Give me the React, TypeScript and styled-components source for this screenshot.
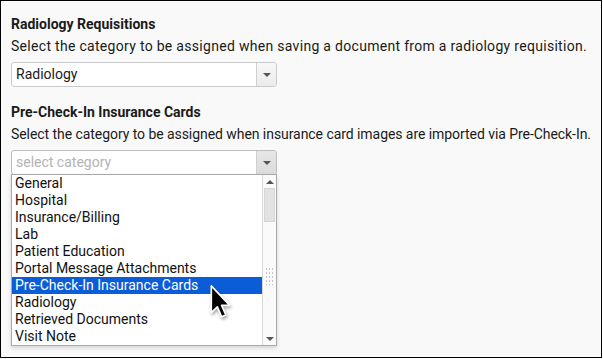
import React from 'react';
import styled, { createGlobalStyle } from 'styled-components';

const GlobalStyle = createGlobalStyle`
	html, body {
		margin: 0;
		padding: 0;
		background: #ffffff;
	}
	* {
		box-sizing: border-box;
	}
`;

const Frame = styled.div`
	position: relative;
	width: 602px;
	height: 358px;
	border: 1.5px solid #000;
	background: #f9f9f9;
	padding: 15px 10px 0 10px;
	font-family: Roboto, 'Liberation Sans', sans-serif;
	font-size: 14px;
	color: #1a1a1a;
`;

const Section = styled.section<{ gap: number }>`
	display: flex;
	flex-direction: column;
	margin-bottom: ${({ gap }) => gap}px;
`;

const Title = styled.h3`
	margin: 0 0 5px 0;
	font-size: 14px;
	line-height: 17px;
	font-weight: 700;
`;

const Description = styled.p<{ tracking: number }>`
	margin: 0 0 7px 0;
	font-size: 14px;
	line-height: 17px;
	letter-spacing: ${({ tracking }) => tracking}px;
	white-space: nowrap;
`;

const SelectWrap = styled.div`
	position: relative;
	width: 266px;
`;

const SelectBox = styled.div<{ focused?: boolean }>`
	display: flex;
	height: 25px;
	border: 1px solid ${({ focused }) => (focused ? '#bdbdbd' : '#cacaca')};
	border-radius: 3px;
	background: #fff;
	overflow: hidden;
`;

const SelectValue = styled.div<{ placeholder?: boolean }>`
	flex: 1;
	padding: 0 4px;
	line-height: 23px;
	color: ${({ placeholder }) => (placeholder ? '#b4b4b4' : '#1a1a1a')};
`;

const ArrowBox = styled.div<{ focused?: boolean }>`
	width: 20px;
	display: flex;
	align-items: center;
	justify-content: center;
	border-left: 1px solid #cfcfcf;
	background: ${({ focused }) =>
		focused ? 'linear-gradient(#e6e6e6, #dcdcdc)' : 'linear-gradient(#f7f7f7, #ececec)'};
`;

const Caret = styled.span<{ up?: boolean }>`
	width: 0;
	height: 0;
	border-left: 4px solid transparent;
	border-right: 4px solid transparent;
	${({ up }) => (up ? 'border-bottom: 4px solid #555;' : 'border-top: 4px solid #555;')}
`;

const Dropdown = styled.div`
	position: absolute;
	top: 24px;
	left: 0;
	width: 266px;
	height: 172px;
	display: flex;
	border: 1px solid #a9a9a9;
	background: #fff;
	box-shadow: 0 2px 4px rgba(0, 0, 0, 0.15);
	z-index: 2;
`;

const List = styled.ul`
	flex: 1;
	margin: 0;
	padding: 0;
	list-style: none;
`;

const Item = styled.li<{ active?: boolean }>`
	height: 17px;
	line-height: 17px;
	padding-left: 3px;
	white-space: nowrap;
	background: ${({ active }) => (active ? '#0b5cd7' : 'transparent')};
	color: ${({ active }) => (active ? '#fff' : '#111')};
`;

const Scrollbar = styled.div`
	position: relative;
	width: 14px;
	display: flex;
	flex-direction: column;
	border-left: 1px solid #d6d6d6;
	background: #fafafa;
`;

const ScrollButton = styled.div`
	height: 13px;
	display: flex;
	align-items: center;
	justify-content: center;
`;

const Thumb = styled.div`
	height: 34px;
	margin: 0 1px;
	background: #e2e2e2;
	border: 1px solid #d6d6d6;
`;

const Track = styled.div`
	flex: 1;
`;

const Grip = styled.div`
	position: absolute;
	left: 2px;
	top: 92px;
	width: 10px;
	height: 18px;
	background-image: radial-gradient(circle, #c4c4c4 0.8px, transparent 1px);
	background-size: 3px 4px;
`;

const Pointer = styled.svg`
	position: absolute;
	left: 198px;
	top: 134px;
	z-index: 3;
	filter: drop-shadow(1px 2px 1.5px rgba(0, 0, 0, 0.35));
`;

const categories = [
	'General',
	'Hospital',
	'Insurance/Billing',
	'Lab',
	'Patient Education',
	'Portal Message Attachments',
	'Pre-Check-In Insurance Cards',
	'Radiology',
	'Retrieved Documents',
	'Visit Note',
];

const App = () => {
	return (
		<>
			<GlobalStyle />
			<Frame>
				<Section gap={17}>
					<Title>Radiology Requisitions</Title>
					<Description tracking={0.3}>
						Select the category to be assigned when saving a document from a radiology requisition.
					</Description>
					<SelectWrap>
						<SelectBox>
							<SelectValue>Radiology</SelectValue>
							<ArrowBox>
								<Caret />
							</ArrowBox>
						</SelectBox>
					</SelectWrap>
				</Section>
				<Section gap={0}>
					<Title>Pre-Check-In Insurance Cards</Title>
					<Description tracking={-0.06}>
						Select the category to be assigned when insurance card images are imported via Pre-Check-In.
					</Description>
					<SelectWrap>
						<SelectBox focused>
							<SelectValue placeholder>select category</SelectValue>
							<ArrowBox focused>
								<Caret />
							</ArrowBox>
						</SelectBox>
						<Dropdown>
							<List>
								{categories.map((c) => (
									<Item key={c} active={c === 'Pre-Check-In Insurance Cards'}>
										{c}
									</Item>
								))}
							</List>
							<Scrollbar>
								<ScrollButton>
									<Caret up />
								</ScrollButton>
								<Thumb />
								<Track />
								<ScrollButton>
									<Caret />
								</ScrollButton>
								<Grip />
							</Scrollbar>
						</Dropdown>
						<Pointer width='23' height='35' viewBox='0 0 12 19'>
							<path
								d='M1 1 L1 15.5 L4.3 12.4 L6.6 17.8 L8.9 16.8 L6.6 11.6 L11 11.6 Z'
								fill='#000'
								stroke='#fff'
								strokeWidth='0.9'
								strokeLinejoin='round'
							/>
						</Pointer>
					</SelectWrap>
				</Section>
			</Frame>
		</>
	);
};

export default App;
